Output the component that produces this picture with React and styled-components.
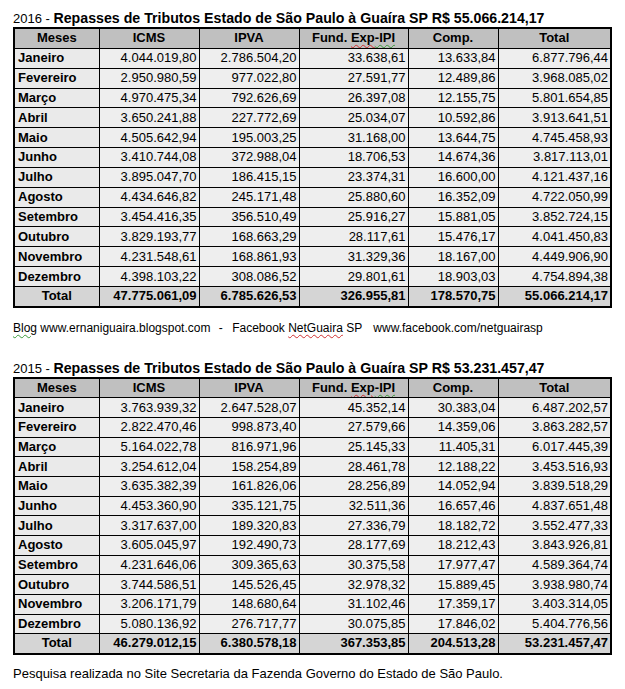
import React from "react";
import styled, { createGlobalStyle } from "styled-components";

const Global = createGlobalStyle`
  html, body { margin: 0; padding: 0; background: #fff; }
  body { font-family: "Liberation Sans", Arial, sans-serif; color: #000; }
`;

const Page = styled.div`
  width: 625px;
  height: 689px;
  padding: 0 0 0 13px;
  box-sizing: border-box;
  display: flex;
  flex-direction: column;
  overflow: hidden;
`;

const Title = styled.div`
  padding-top: ${(p) => p.$pt}px;
  line-height: 17px;
  white-space: pre;
  font-size: 14.2px;
  font-weight: bold;
`;

const Plain = styled.span`
  font-weight: normal;
  font-size: 13px;
`;

const Squiggle = styled.span`
  text-decoration: underline wavy ${(p) => p.$c || "#3a9a3a"};
  text-decoration-thickness: 1px;
  text-underline-offset: 2px;
`;

const Table = styled.table`
  border-collapse: collapse;
  border: 2px solid #000;
  table-layout: fixed;
  width: 597px;
  font-size: 13px;
`;

const Cell = styled.td`
  border: 1px solid #000;
  height: ${(p) => p.$h}px;
  padding: 0 3px 0 3px;
  line-height: 16px;
  white-space: nowrap;
  overflow: hidden;
`;

const HeadCell = styled(Cell).attrs({ as: "th" })`
  background: #c0c0c0;
  font-weight: bold;
  text-align: center;
`;

const MonthCell = styled(Cell)`
  background: #eaeaea;
  font-weight: bold;
  text-align: left;
`;

const NumCell = styled(Cell)`
  background: #eeeeee;
  text-align: right;
  padding-right: 2px;
`;

const TotalLabel = styled(Cell)`
  background: #d5d5d5;
  font-weight: bold;
  text-align: center;
`;

const TotalNum = styled(NumCell)`
  background: #d5d5d5;
  font-weight: bold;
`;

const Note = styled.div`
  margin-top: ${(p) => p.$mt}px;
  font-size: ${(p) => p.$fs}px;
  line-height: 16px;
  white-space: nowrap;
`;

const Gap = styled.span`
  display: inline-block;
  width: ${(p) => p.$w}px;
`;

const widths = [85, 100, 100, 109, 90, 113];
const heads = ["Meses", "ICMS", "IPVA", "Fund. Exp-IPI", "Comp.", "Total"];

const data2016 = [
  ["Janeiro", "4.044.019,80", "2.786.504,20", "33.638,61", "13.633,84", "6.877.796,44"],
  ["Fevereiro", "2.950.980,59", "977.022,80", "27.591,77", "12.489,86", "3.968.085,02"],
  ["Março", "4.970.475,34", "792.626,69", "26.397,08", "12.155,75", "5.801.654,85"],
  ["Abril", "3.650.241,88", "227.772,69", "25.034,07", "10.592,86", "3.913.641,51"],
  ["Maio", "4.505.642,94", "195.003,25", "31.168,00", "13.644,75", "4.745.458,93"],
  ["Junho", "3.410.744,08", "372.988,04", "18.706,53", "14.674,36", "3.817.113,01"],
  ["Julho", "3.895.047,70", "186.415,15", "23.374,31", "16.600,00", "4.121.437,16"],
  ["Agosto", "4.434.646,82", "245.171,48", "25.880,60", "16.352,09", "4.722.050,99"],
  ["Setembro", "3.454.416,35", "356.510,49", "25.916,27", "15.881,05", "3.852.724,15"],
  ["Outubro", "3.829.193,77", "168.663,29", "28.117,61", "15.476,17", "4.041.450,83"],
  ["Novembro", "4.231.548,61", "168.861,93", "31.329,36", "18.167,00", "4.449.906,90"],
  ["Dezembro", "4.398.103,22", "308.086,52", "29.801,61", "18.903,03", "4.754.894,38"],
];
const total2016 = ["47.775.061,09", "6.785.626,53", "326.955,81", "178.570,75", "55.066.214,17"];

const data2015 = [
  ["Janeiro", "3.763.939,32", "2.647.528,07", "45.352,14", "30.383,04", "6.487.202,57"],
  ["Fevereiro", "2.822.470,46", "998.873,40", "27.579,66", "14.359,06", "3.863.282,57"],
  ["Março", "5.164.022,78", "816.971,96", "25.145,33", "11.405,31", "6.017.445,39"],
  ["Abril", "3.254.612,04", "158.254,89", "28.461,78", "12.188,22", "3.453.516,93"],
  ["Maio", "3.635.382,39", "161.826,06", "28.256,89", "14.052,94", "3.839.518,29"],
  ["Junho", "4.453.360,90", "335.121,75", "32.511,36", "16.657,46", "4.837.651,48"],
  ["Julho", "3.317.637,00", "189.320,83", "27.336,79", "18.182,72", "3.552.477,33"],
  ["Agosto", "3.605.045,97", "192.490,73", "28.177,69", "18.212,43", "3.843.926,81"],
  ["Setembro", "4.231.646,06", "309.365,63", "30.375,58", "17.977,47", "4.589.364,74"],
  ["Outubro", "3.744.586,51", "145.526,45", "32.978,32", "15.889,45", "3.938.980,74"],
  ["Novembro", "3.206.171,79", "148.680,64", "31.102,46", "17.359,17", "3.403.314,05"],
  ["Dezembro", "5.080.136,92", "276.717,77", "30.075,85", "17.846,02", "5.404.776,56"],
];
const total2015 = ["46.279.012,15", "6.380.578,18", "367.353,85", "204.513,28", "53.231.457,47"];

function HeadLabel({ text }) {
  if (text === "Fund. Exp-IPI") {
    return (
      <>
        Fund. <Squiggle $c="#d03030">Exp</Squiggle>
        <Squiggle>-IPI</Squiggle>
      </>
    );
  }
  return text;
}

function RepasseTable({ rows, total, h }) {
  return (
    <Table>
      <colgroup>
        {widths.map((w, i) => (
          <col key={i} style={{ width: w }} />
        ))}
      </colgroup>
      <thead>
        <tr>
          {heads.map((x) => (
            <HeadCell key={x} $h={h}>
              <HeadLabel text={x} />
            </HeadCell>
          ))}
        </tr>
      </thead>
      <tbody>
        {rows.map((r) => (
          <tr key={r[0]}>
            <MonthCell $h={h}>{r[0]}</MonthCell>
            {r.slice(1).map((v, i) => (
              <NumCell key={i} $h={h}>{v}</NumCell>
            ))}
          </tr>
        ))}
        <tr>
          <TotalLabel $h={h}>Total</TotalLabel>
          {total.map((v, i) => (
            <TotalNum key={i} $h={h}>{v}</TotalNum>
          ))}
        </tr>
      </tbody>
    </Table>
  );
}

function Heading({ year, amount, pt }) {
  return (
    <Title $pt={pt}>
      <Plain>{year} - </Plain>
      Repasses de Tributos Estado de São Paulo à Guaíra SP<Squiggle> </Squiggle>R$ {amount}
    </Title>
  );
}

export default function App() {
  return (
    <Page>
      <Global />
      <Heading year="2016" amount="55.066.214,17" pt={10} />
      <RepasseTable rows={data2016} total={total2016} h={18.85} />
      <Note $mt={12} $fs={12}>
        <Squiggle>Blog</Squiggle> www.ernaniguaira.blogspot.com <Gap $w={5} />-<Gap $w={6} /> Facebook{" "}
        <Squiggle $c="#d03030">NetGuaira</Squiggle> SP <Gap $w={8} />www.facebook.com/netguairasp
      </Note>
      <Heading year="2015" amount="53.231.457,47" pt={24} />
      <RepasseTable rows={data2015} total={total2015} h={18.65} />
      <Note $mt={11} $fs={13}>
        Pesquisa realizada no Site Secretaria da Fazenda Governo do Estado de São Paulo.
      </Note>
    </Page>
  );
}
